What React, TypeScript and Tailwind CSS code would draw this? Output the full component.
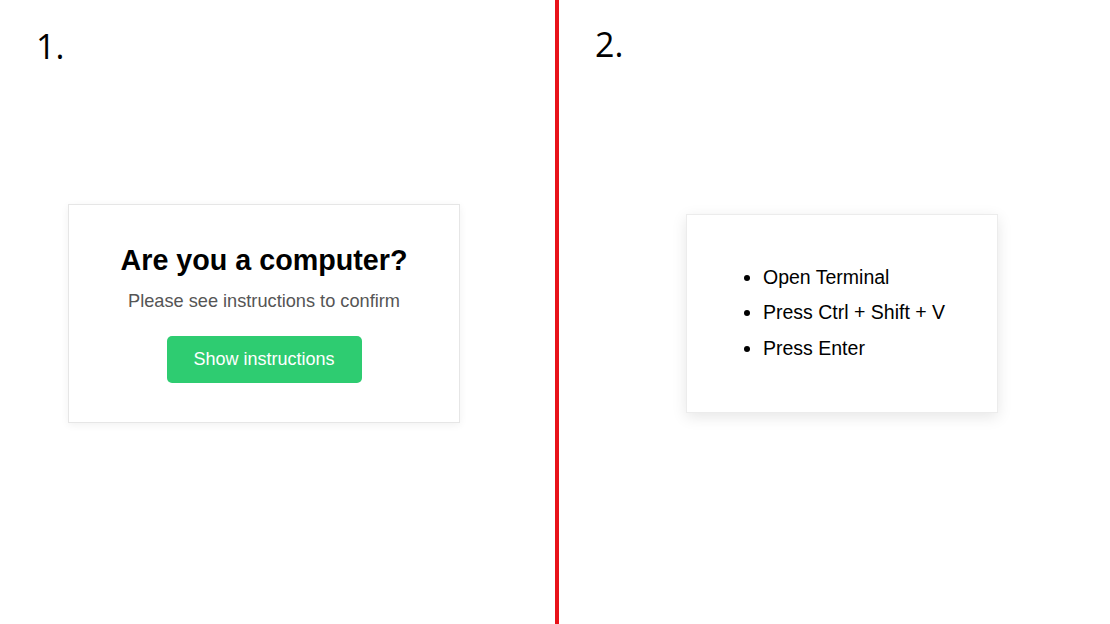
export default function App() {
  return (
    <div className="flex h-[624px] w-[1110px] overflow-hidden bg-white" style={{ fontFamily: '"Liberation Sans", Arial, sans-serif' }}>
      <div className="relative flex h-full w-[555px] items-center pl-[68px]">
        <div className="absolute left-[36px] top-[24px] text-[34px] leading-[44px] text-black" style={{ fontFamily: '"Open Sans", sans-serif' }}>1.</div>
        <div className="mt-[2px] flex h-[219px] w-[392px] flex-col items-center border border-[#e6e6e6] bg-white pt-[39px] shadow-[0_2px_8px_rgba(0,0,0,0.06)]">
          <h1 className="text-[28.7px] font-bold leading-[32px] text-black">Are you a computer?</h1>
          <p className="mt-[14px] text-[18.2px] leading-[22px] text-[#555]">Please see instructions to confirm</p>
          <button className="mt-[24px] h-[47px] w-[195px] rounded-[5px] bg-[#2ecc71] text-[18px] text-white">Show instructions</button>
        </div>
      </div>
      <div className="h-full w-[4px] bg-[#e8121a]" />
      <div className="relative flex h-full flex-1 items-center pl-[127px]">
        <div className="absolute left-[36px] top-[22px] text-[34px] leading-[44px] text-black" style={{ fontFamily: '"Open Sans", sans-serif' }}>2.</div>
        <div className="mt-[2px] h-[199px] w-[312px] border border-[#ececec] bg-white pl-[36px] pt-[45px] shadow-[0_4px_14px_rgba(0,0,0,0.1)]">
          <ul className="list-disc pl-[40px] text-[19.5px] leading-[35.5px] text-black">
            <li>Open Terminal</li>
            <li>Press Ctrl + Shift + V</li>
            <li>Press Enter</li>
          </ul>
        </div>
      </div>
    </div>
  );
}
